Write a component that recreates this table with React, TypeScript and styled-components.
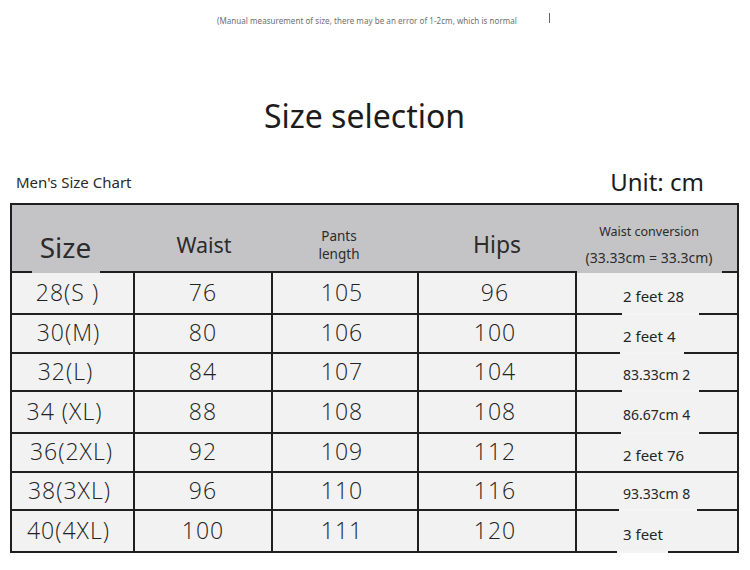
import React from "react";
import styled, { createGlobalStyle } from "styled-components";

const Global = createGlobalStyle`
  html, body { margin: 0; padding: 0; background: #ffffff; }
  body { font-family: "Noto Sans", "Open Sans", sans-serif; color: #2a2a2a; }
`;

const Page = styled.div`
  width: 750px;
  height: 570px;
  display: flex;
  flex-direction: column;
  overflow: hidden;
`;

const TopNote = styled.div`
  display: flex;
  align-items: center;
  padding: 16px 0 0 217px;
  height: 10px;
  font-size: 8px;
  line-height: 10px;
  letter-spacing: 0.05px;
  color: #6f6f6f;
  white-space: nowrap;
`;

const Caret = styled.span`
  display: inline-block;
  width: 1px;
  height: 10px;
  margin-left: 32px;
  margin-top: -6px;
  background: #666;
`;

const Title = styled.h1`
  margin: 70px 0 0 0;
  text-align: center;
  font-size: 32px;
  line-height: 40px;
  font-weight: 400;
  color: #1c1c1c;
  padding-right: 21px;
`;

const ChartBar = styled.div`
  display: flex;
  justify-content: space-between;
  align-items: flex-end;
  height: 67px;
  padding: 0 46px 0 16px;
`;

const ChartName = styled.div`
  font-size: 15px;
  line-height: 20px;
  margin-bottom: 11px;
  color: #2a2a2a;
`;

const Unit = styled.div`
  font-size: 24px;
  line-height: 30px;
  margin-bottom: 6px;
  color: #1c1c1c;
`;

const Table = styled.div`
  margin-left: 10px;
  width: 729px;
  border: 2px solid #1f1f1f;
  box-sizing: border-box;
  display: flex;
  flex-direction: column;
`;

const COLS = "123px 138px 146px 158px 160px";

const HeaderRow = styled.div`
  display: grid;
  grid-template-columns: ${COLS};
  height: 66px;
  background: #c4c4c6;
  border-bottom: 2px solid #1f1f1f;
`;

const HeadCell = styled.div<{ $top: number; $size: number; $shift?: number }>`
  position: relative;
  display: flex;
  flex-direction: column;
  align-items: center;
  padding-top: ${(p) => p.$top}px;
  padding-right: ${(p) => p.$shift ?? 0}px;
  box-sizing: border-box;
  font-size: ${(p) => p.$size}px;
  line-height: 1;
  color: #2b2b2b;
`;

const SmallHead = styled.span<{ $size: number; $lh: number; $mt?: number }>`
  display: block;
  font-size: ${(p) => p.$size}px;
  line-height: ${(p) => p.$lh}px;
  margin-top: ${(p) => p.$mt ?? 0}px;
  text-align: center;
  white-space: nowrap;
`;

const BodyRow = styled.div<{ $h: number; $last?: boolean }>`
  display: grid;
  grid-template-columns: ${COLS};
  height: ${(p) => p.$h}px;
  background: #f2f2f2;
  border-bottom: ${(p) => (p.$last ? "none" : "2px solid #1f1f1f")};
`;

const Cell = styled.div<{ $shift?: number }>`
  position: relative;
  display: flex;
  align-items: center;
  justify-content: center;
  border-right: 2px solid #1f1f1f;
  padding-bottom: 3px;
  padding-right: ${(p) => p.$shift ?? 0}px;
  box-sizing: border-box;
  font-family: "Open Sans", "Noto Sans", sans-serif;
  font-size: 23px;
  font-weight: 300;
  letter-spacing: 1px;
  color: #222222;
  white-space: pre;
`;

const ConvCell = styled.div<{ $size: number }>`
  position: relative;
  display: flex;
  align-items: center;
  padding: 5px 0 0 46px;
  box-sizing: border-box;
  font-size: ${(p) => p.$size}px;
  color: #262626;
  white-space: nowrap;
`;

const Gap = styled.span<{ $left: number; $width: number; $color: string }>`
  position: absolute;
  left: ${(p) => p.$left}px;
  width: ${(p) => p.$width}px;
  bottom: -2px;
  height: 2px;
  background: ${(p) => p.$color};
`;

type Row = {
  size: string;
  waist: string;
  pants: string;
  hips: string;
  conv: string;
  convSize: number;
  h: number;
  gap?: [number, number];
  sizeShift: number;
};

const rows: Row[] = [
  { size: "28(S )", waist: "76", pants: "105", hips: "96", conv: "2 feet 28", convSize: 15, h: 40, gap: [45, 77], sizeShift: 10 },
  { size: "30(M)", waist: "80", pants: "106", hips: "100", conv: "2 feet 4", convSize: 15, h: 37, gap: [43, 64], sizeShift: 8 },
  { size: "32(L)", waist: "84", pants: "107", hips: "104", conv: "83.33cm 2", convSize: 14, h: 36, gap: [45, 77], sizeShift: 14 },
  { size: "34 (XL)", waist: "88", pants: "108", hips: "108", conv: "86.67cm 4", convSize: 14, h: 40, gap: [44, 78], sizeShift: 16 },
  { size: "36(2XL)", waist: "92", pants: "109", hips: "112", conv: "2 feet 76", convSize: 15, h: 37, sizeShift: 2 },
  { size: "38(3XL)", waist: "96", pants: "110", hips: "116", conv: "93.33cm 8", convSize: 14, h: 36, gap: [42, 78], sizeShift: 6 },
  { size: "40(4XL)", waist: "100", pants: "111", hips: "120", conv: "3 feet", convSize: 15, h: 40, gap: [40, 51], sizeShift: 8 },
];

export default function App() {
  return (
    <Page>
      <Global />
      <TopNote>
        (Manual measurement of size, there may be an error of 1-2cm, which is normal
        <Caret />
      </TopNote>
      <Title>Size selection</Title>
      <ChartBar>
        <ChartName>Men's Size Chart</ChartName>
        <Unit>Unit: cm</Unit>
      </ChartBar>
      <Table>
        <HeaderRow>
          <HeadCell $top={28} $size={28} $shift={16}>
            Size
            <Gap $left={20} $width={68} $color="#c4c4c6" />
          </HeadCell>
          <HeadCell $top={29} $size={21.5}>Waist</HeadCell>
          <HeadCell $top={21.5} $size={13.5} $shift={14}>
            <SmallHead $size={13.5} $lh={18.5}>Pants</SmallHead>
            <SmallHead $size={13.5} $lh={18.5}>length</SmallHead>
          </HeadCell>
          <HeadCell $top={27.5} $size={23} $shift={2}>Hips</HeadCell>
          <HeadCell $top={19} $size={14} $shift={16}>
            <SmallHead $size={12.5} $lh={16}>Waist conversion</SmallHead>
            <SmallHead $size={14} $lh={18} $mt={8.5}>(33.33cm = 33.3cm)</SmallHead>
            <Gap $left={0} $width={145} $color="#c4c4c6" />
          </HeadCell>
        </HeaderRow>
        {rows.map((r, i) => (
          <BodyRow key={r.size} $h={r.h} $last={i === rows.length - 1}>
            <Cell $shift={r.sizeShift}>{r.size}</Cell>
            <Cell>{r.waist}</Cell>
            <Cell $shift={6}>{r.pants}</Cell>
            <Cell $shift={4}>{r.hips}</Cell>
            <ConvCell $size={r.convSize}>
              {r.conv}
              {r.gap && <Gap $left={r.gap[0]} $width={r.gap[1]} $color="#f4f4f4" />}
            </ConvCell>
          </BodyRow>
        ))}
      </Table>
    </Page>
  );
}
